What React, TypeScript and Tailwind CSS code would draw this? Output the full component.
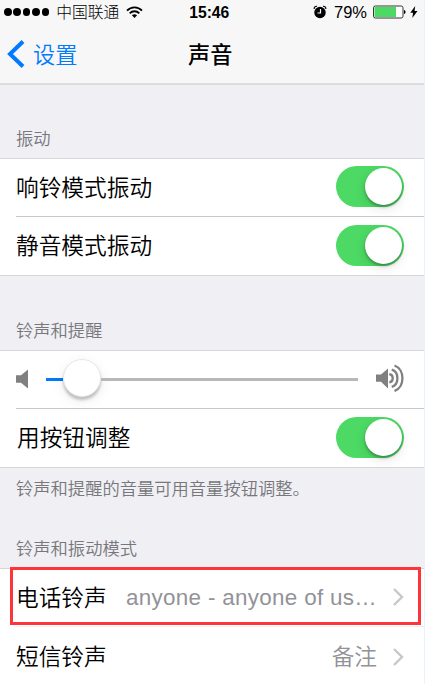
import type { ReactNode } from "react";

const StatusBar = () => {
  return (
    <div className="flex items-center h-6 pl-[4px] pr-[6px]">
      <div className="flex gap-[1.7px] mr-[7px]">
        {[0, 1, 2, 3, 4].map((dot) => (
          <span key={dot} className="size-[7.7px] rounded-full bg-black" />
        ))}
      </div>
      <p className="w-[63px] pt-px text-[15.8px] leading-6 font-light whitespace-nowrap">
        中国联通
      </p>
      <svg
        className="ml-[7px]"
        width="17"
        height="13"
        viewBox="0 0 17 13"
        fill="none"
        stroke="#000"
        strokeWidth="1.9"
      >
        <path d="M1 4.6C5.2.3 11.8.3 16 4.6" />
        <path d="M3.7 7.4c2.7-2.8 6.9-2.8 9.6 0" />
        <path d="M5.9 9.3c1.5-1.5 3.7-1.5 5.2 0L8.5 12z" fill="#000" stroke="none" />
      </svg>
      <p className="ml-[46px] w-[40px] pt-px text-[15.7px] leading-6 font-bold whitespace-nowrap">
        15:46
      </p>
      <svg className="ml-auto mb-px" width="14" height="14" viewBox="0 0 14 14">
        <circle cx="7" cy="7.5" r="5.7" />
        <path
          d="M1.2 4C.9 2.3 2.3 1 4 1.3M12.8 4C13.1 2.3 11.7 1 10 1.3"
          fill="none"
          stroke="#000"
          strokeWidth="1.2"
        />
        <path d="M7.5 4v4H4.5" fill="none" stroke="#fff" strokeWidth="1.2" />
      </svg>
      <p className="ml-[7px] w-[39px] text-[16.5px] leading-6 whitespace-nowrap">
        79%
      </p>
      <svg width="33" height="14" viewBox="0 0 33 14">
        <rect
          x=".5"
          y="1"
          width="29.5"
          height="12"
          rx="1.8"
          fill="#fff"
          stroke="#333"
        />
        <rect x="1.5" y="2" width="21.5" height="10" fill="#4cd964" />
        <path d="M31 5c2 .3 2 3.7 0 4z" />
      </svg>
      <svg
        className="ml-[4px] mb-px"
        width="8"
        height="12"
        viewBox="0 0 8 13"
      >
        <path d="M5.3 0L0 7.2h3L2.2 13 7.8 5.3H4.6z" />
      </svg>
    </div>
  );
};

const Toggle = () => {
  return (
    <div className="flex justify-end w-[68px] h-[41px] -mt-[2px] p-[2px] rounded-full bg-[#4cd964]">
      <div className="size-[37px] rounded-full bg-white shadow-[0_2px_3px_rgba(0,0,0,0.3),0_4px_12px_rgba(0,0,0,0.1)]" />
    </div>
  );
};

const Chevron = () => {
  return (
    <svg
      className="-mt-px"
      width="12"
      height="18"
      viewBox="0 0 12 18"
      fill="none"
      stroke="#c7c7cc"
      strokeWidth="2.4"
    >
      <path d="M2 1l8 8-8 8" />
    </svg>
  );
};

const Row = ({ label, children }: { label: string; children: ReactNode }) => {
  return (
    <div className="flex items-center h-full pr-[20px] text-[22.7px] leading-8">
      <p className="shrink-0 whitespace-nowrap">{label}</p>
      {children}
    </div>
  );
};

const SpeakerLow = () => (
  <svg
    className="-mt-[2px]"
    width="13"
    height="20"
    viewBox="0 0 13 20"
    fill="#808080"
  >
    <path d="M0 6.3h5L12 .5v19L5 13.7H0z" />
  </svg>
);

const SpeakerHigh = () => (
  <svg
    className="-mt-[3px]"
    width="28"
    height="28"
    viewBox="0 0 28 28"
    fill="none"
    stroke="#808080"
  >
    <path d="M0 10.5h5L12 4.5v20L5 17.7H0z" fill="#808080" stroke="none" />
    <path
      d="M13.3 10.2c4.6.6 4.6 7.6 0 8.2M15.7 5.7c7.6 2.2 7.6 15 0 17.2M18.5 1.5c10.6 4 10.6 21.5 0 25.5"
      strokeWidth="2.3"
    />
  </svg>
);

const App = () => {
  return (
    <div className="w-full h-[684px] overflow-hidden bg-[#efeff4] border-r border-[#eaf2fc] text-black font-['Liberation_Sans','Noto_Sans_CJK_SC',sans-serif]">
      <header className="h-[85px] bg-[#f7f7f7] border-b-2 border-[#dcdcde]">
        <StatusBar />
        <div className="grid grid-cols-3 items-center h-[60px] pl-[7px] text-[22.2px]">
          <div className="flex items-center gap-[8px] text-[#007aff] font-[350]">
            <svg
              width="18"
              height="28"
              viewBox="0 0 18 28"
              fill="none"
              stroke="#007aff"
              strokeWidth="4"
            >
              <path d="M16 1.5L3 14l13 12.5" />
            </svg>
            <p className="pt-[4px]">设置</p>
          </div>
          <h1 className="pt-[4px] pl-[42px] font-medium">声音</h1>
        </div>
      </header>

      <h2 className="h-[73px] pt-[42px] pl-[16px] text-[17.3px] leading-6 font-[350] text-[#77777c]">
        振动
      </h2>
      <div className="bg-white border-y border-[#d6d6da] pl-[16px] font-[350]">
        <div className="h-[58px] border-b border-[#c8c7cc]">
          <Row label="响铃模式振动">
            <div className="ml-auto">
              <Toggle />
            </div>
          </Row>
        </div>
        <div className="h-[58px]">
          <Row label="静音模式振动">
            <div className="ml-auto">
              <Toggle />
            </div>
          </Row>
        </div>
      </div>

      <h2 className="h-[74px] pt-[43px] pl-[16px] text-[17.3px] leading-6 font-[350] text-[#77777c]">
        铃声和提醒
      </h2>
      <div className="bg-white border-y border-[#d6d6da] pl-[16px] font-[350]">
        <div className="flex items-center h-[58px] pr-[20px] border-b border-[#c8c7cc]">
          <SpeakerLow />
          <div className="flex items-center w-[312px] -mt-[2px] ml-[17px] mr-auto">
            <div className="w-[17px] h-[3px] mt-[2px] bg-[#007aff]" />
            <div className="size-[38px] -mt-px rounded-full bg-white border border-[#e8e8e8] shadow-[0_3px_3px_rgba(0,0,0,0.22),0_4px_14px_rgba(0,0,0,0.08)]" />
            <div className="grow h-[3px] mt-[2px] bg-[#b8b8b8]" />
          </div>
          <SpeakerHigh />
        </div>
        <div className="h-[58px] pl-px">
          <Row label="用按钮调整">
            <div className="ml-auto">
              <Toggle />
            </div>
          </Row>
        </div>
      </div>
      <p className="h-[60px] pt-[9px] pl-[16px] text-[17.3px] leading-6 font-[350] text-[#77777c]">
        铃声和提醒的音量可用音量按钮调整。
      </p>

      <h2 className="h-[40px] pt-[9px] pl-[16px] text-[17.3px] leading-6 font-[350] text-[#77777c]">
        铃声和振动模式
      </h2>
      <div className="relative bg-white border-t border-[#d6d6da] pl-[16px] font-[350]">
        {/* 高亮框 */}
        <div className="absolute left-[10px] -top-[2px] w-[411px] h-[58px] border-3 border-[#ff3438]" />
        <div className="h-[58px] border-b border-[#efeff1]">
          <Row label="电话铃声">
            <p className="ml-auto mr-[15px] pt-px text-[22.4px] tracking-[0.32px] text-[#929297] whitespace-nowrap">
              anyone - anyone of us…
            </p>
            <Chevron />
          </Row>
        </div>
        <div className="h-[58px] pt-[2px]">
          <Row label="短信铃声">
            <p className="ml-auto mr-[15px] text-[#929297]">备注</p>
            <Chevron />
          </Row>
        </div>
      </div>
    </div>
  );
};

export default App;
